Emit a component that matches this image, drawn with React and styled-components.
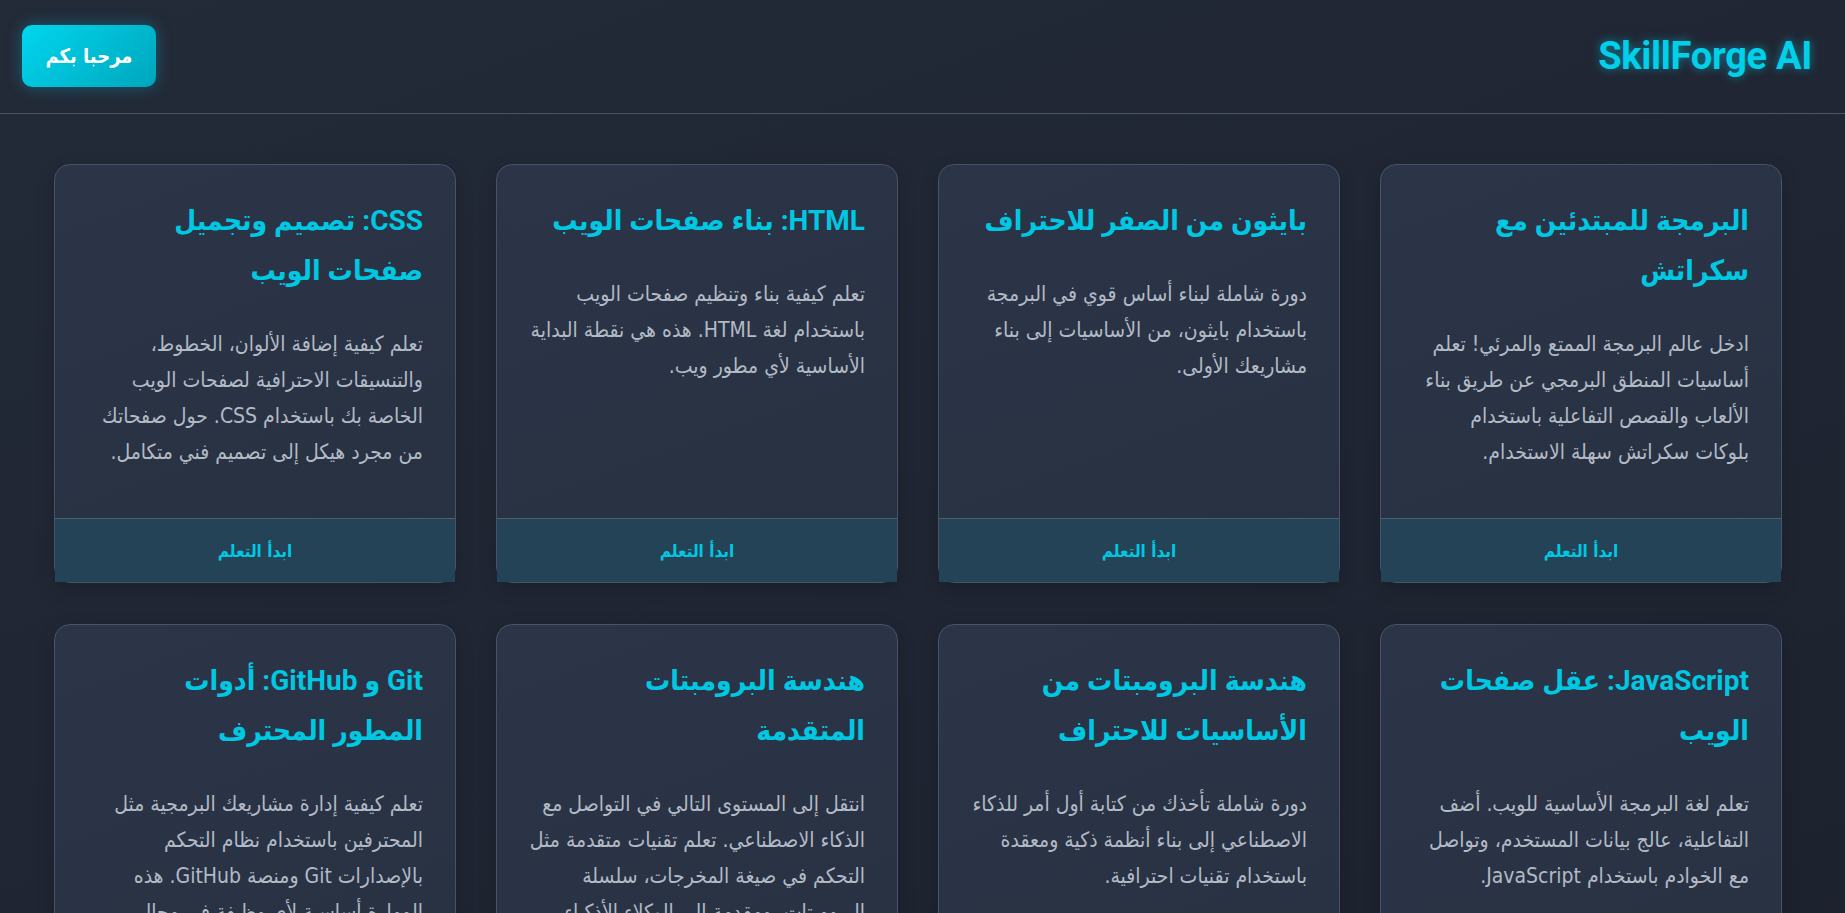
import React from 'react';
import styled, { createGlobalStyle } from 'styled-components';

const GlobalStyle = createGlobalStyle`
  html, body {
    margin: 0;
    padding: 0;
    background: #1e2330;
  }
  body {
    font-family: "DejaVu Sans Condensed", "DejaVu Sans", "Noto Sans", sans-serif;
    color: #b4bcc8;
    min-height: 100vh;
    background: linear-gradient(160deg, #232a38 0%, #1c212d 100%);
  }
  * {
    box-sizing: border-box;
  }
`;

const Page = styled.div`
  direction: rtl;
  min-height: 100vh;
`;

const Header = styled.header`
  height: 114px;
  display: flex;
  align-items: center;
  justify-content: space-between;
  padding: 0 33px 2px 22px;
  border-bottom: 1px solid #4a5468;
`;

const Logo = styled.h1`
  margin: 0;
  font-family: Roboto, "Noto Sans", sans-serif;
  font-size: 38px;
  font-weight: 700;
  color: #00d0ea;
  letter-spacing: -0.3px;
  text-shadow: 0 0 10px rgba(0, 208, 234, 0.55);
`;

const WelcomeButton = styled.button`
  width: 134px;
  height: 62px;
  border: 0;
  border-radius: 10px;
  background: linear-gradient(135deg, #00d6ee 0%, #00a6bc 100%);
  color: #ffffff;
  font-family: "DejaVu Sans Condensed", "DejaVu Sans", sans-serif;
  font-size: 20px;
  font-weight: 700;
  cursor: pointer;
  box-shadow: 0 0 16px rgba(0, 200, 230, 0.35);
`;

const Grid = styled.main`
  display: grid;
  grid-template-columns: repeat(4, 1fr);
  column-gap: 40px;
  row-gap: 41px;
  padding: 50px 63px 40px 54px;
`;

const Card = styled.article`
  display: flex;
  flex-direction: column;
  background: linear-gradient(160deg, #2c3547 0%, #283142 100%);
  border: 1px solid #465369;
  border-radius: 16px;
  box-shadow: 0 6px 18px rgba(0, 0, 0, 0.18);
`;

const CardBody = styled.div`
  flex: 1;
  padding: 31px 32px 48px;
`;

const CardTitle = styled.h2`
  margin: 0 0 30px;
  padding-left: 4px;
  font-family: "Liberation Sans Narrow", Roboto, "DejaVu Sans Condensed", "DejaVu Sans", sans-serif;
  font-size: 28px;
  line-height: 50px;
  font-weight: 700;
  color: #00c8e2;
`;

const CardText = styled.p`
  margin: 0;
  font-size: 21px;
  line-height: 36px;
  color: #b2bac6;
`;

const CardFooter = styled.div`
  height: 64px;
  display: flex;
  align-items: center;
  justify-content: center;
  background: #244356;
  border-top: 1px solid #4a5f72;
  color: #00c8e2;
  font-size: 17px;
  font-weight: 700;
`;

const courses = [
  {
    title: 'البرمجة للمبتدئين مع سكراتش',
    text: 'ادخل عالم البرمجة الممتع والمرئي! تعلم أساسيات المنطق البرمجي عن طريق بناء الألعاب والقصص التفاعلية باستخدام بلوكات سكراتش سهلة الاستخدام.',
  },
  {
    title: 'بايثون من الصفر للاحتراف',
    text: 'دورة شاملة لبناء أساس قوي في البرمجة باستخدام بايثون، من الأساسيات إلى بناء مشاريعك الأولى.',
  },
  {
    title: 'HTML: بناء صفحات الويب',
    text: 'تعلم كيفية بناء وتنظيم صفحات الويب باستخدام لغة HTML. هذه هي نقطة البداية الأساسية لأي مطور ويب.',
  },
  {
    title: 'CSS: تصميم وتجميل صفحات الويب',
    text: 'تعلم كيفية إضافة الألوان، الخطوط، والتنسيقات الاحترافية لصفحات الويب الخاصة بك باستخدام CSS. حول صفحاتك من مجرد هيكل إلى تصميم فني متكامل.',
  },
  {
    title: 'JavaScript: عقل صفحات الويب',
    text: 'تعلم لغة البرمجة الأساسية للويب. أضف التفاعلية، عالج بيانات المستخدم، وتواصل مع الخوادم باستخدام JavaScript.',
  },
  {
    title: 'هندسة البرومبتات من الأساسيات للاحتراف',
    text: 'دورة شاملة تأخذك من كتابة أول أمر للذكاء الاصطناعي إلى بناء أنظمة ذكية ومعقدة باستخدام تقنيات احترافية.',
  },
  {
    title: 'هندسة البرومبتات المتقدمة',
    text: 'انتقل إلى المستوى التالي في التواصل مع الذكاء الاصطناعي. تعلم تقنيات متقدمة مثل التحكم في صيغة المخرجات، سلسلة البرومبتات، ومقدمة إلى الوكلاء الأذكياء.',
  },
  {
    title: 'Git و GitHub: أدوات المطور المحترف',
    text: 'تعلم كيفية إدارة مشاريعك البرمجية مثل المحترفين باستخدام نظام التحكم بالإصدارات Git ومنصة GitHub. هذه المهارة أساسية لأي وظيفة في مجال البرمجة.',
  },
];

export default function App() {
  return (
    <Page>
      <GlobalStyle />
      <Header>
        <Logo>SkillForge AI</Logo>
        <WelcomeButton>مرحبا بكم</WelcomeButton>
      </Header>
      <Grid>
        {courses.map((c) => (
          <Card key={c.title}>
            <CardBody>
              <CardTitle>{c.title}</CardTitle>
              <CardText>{c.text}</CardText>
            </CardBody>
            <CardFooter>ابدأ التعلم</CardFooter>
          </Card>
        ))}
      </Grid>
    </Page>
  );
}
